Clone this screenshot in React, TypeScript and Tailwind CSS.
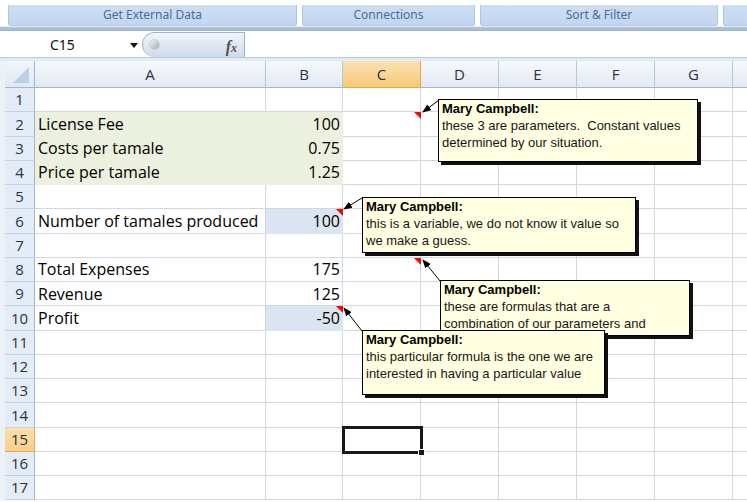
import React from "react";

const CELL_FONT = { fontFamily: '"Open Sans", "Liberation Sans", sans-serif' };
const UI_FONT = { fontFamily: '"Noto Sans", "Open Sans", sans-serif' };
const NOTE_FONT = { fontFamily: '"Liberation Sans", Arial, sans-serif' };

// H sits past the window edge, so only its left part (no caption) shows
const COLS = ["A", "B", "C", "D", "E", "F", "G", ""];

type Fill = "none" | "green" | "blue";

const rows: Record<number, { a?: string; b?: string; fillA?: Fill; fillB?: Fill }> = {
  2: { a: "License Fee", b: "100", fillA: "green", fillB: "green" },
  3: { a: "Costs per tamale", b: "0.75", fillA: "green", fillB: "green" },
  4: { a: "Price per tamale", b: "1.25", fillA: "green", fillB: "green" },
  6: { a: "Number of tamales produced", b: "100", fillB: "blue" },
  8: { a: "Total Expenses", b: "175" },
  9: { a: "Revenue", b: "125" },
  10: { a: "Profit", b: "-50", fillB: "blue" },
};

const fillClass: Record<Fill, string> = {
  none: "bg-white border-[#d0d7e5]",
  green: "bg-[#ebf1de] border-[#ebf1de]",
  blue: "bg-[#dbe5f1] border-[#dbe5f1]",
};

function RibbonGroup({ label, className }: { label: string; className: string }) {
  return (
    <div
      className={`h-[21px] flex items-center justify-center rounded-b-[3px] border border-t-0 border-[#aec6e6] bg-gradient-to-b from-[#cfdff3] to-[#c2d6ef] text-[12px] text-[#4a6c9e] ${className}`}
      style={UI_FONT}
    >
      {label}
    </div>
  );
}

function Note({ className, lines }: { className: string; lines: string[] }) {
  return (
    <div
      className={`absolute overflow-hidden bg-[#ffffe1] border border-black shadow-[3px_3px_0_#111] pl-[3px] text-[13px] leading-[17px] text-[#1c1416] ${className}`}
      style={NOTE_FONT}
    >
      <div className="font-bold text-black">Mary Campbell:</div>
      {lines.map((l) => (
        <div key={l} className="whitespace-pre">
          {l}
        </div>
      ))}
    </div>
  );
}

export default function App() {
  const rowNums = Array.from({ length: 17 }, (_, i) => i + 1);

  return (
    <div className="relative w-[747px] h-[502px] overflow-hidden bg-white">
      {/* ribbon group captions */}
      <div className="h-[26px] pt-[5px] flex gap-[5px] pl-[8px] bg-white">
        <RibbonGroup label="Get External Data" className="w-[289px]" />
        <RibbonGroup label="Connections" className="w-[173px]" />
        <RibbonGroup label="Sort & Filter" className="w-[238px]" />
        <RibbonGroup label="" className="flex-1 rounded-br-none border-r-0" />
      </div>
      <div className="h-[1px] bg-[#e3ecf7]" />
      <div className="h-[4px] bg-gradient-to-b from-[#b3c6de] to-[#9fb5d0]" />

      {/* formula bar */}
      <div className="h-[26px] flex items-center bg-white">
        <div className="w-[137px] h-full flex items-center pl-[45px] ml-[5px] relative" style={UI_FONT}>
          <span className="text-[14px] text-[#111] mt-[1px]">C15</span>
          <svg className="absolute left-[125px] top-[12px]" width="8" height="5" viewBox="0 0 8 5">
            <path d="M0 0 L8 0 L4 5 Z" fill="#111" />
          </svg>
        </div>
        <div className="w-[103px] h-[25px] self-end relative rounded-l-full border border-[#9fb2cc] border-b-0 bg-gradient-to-b from-[#f2f5fa] to-[#cfdbea]">
          <div className="absolute left-[6px] top-[6px] w-[11px] h-[11px] rounded-full bg-gradient-to-br from-[#f4f4f4] to-[#a9adb3] border border-[#c9ced6]" />
          <span
            className="absolute right-[7px] top-[2px] text-[16px] italic font-bold text-[#505050]"
            style={{ fontFamily: '"Liberation Serif", "DejaVu Serif", serif' }}
          >
            f<span className="text-[12px]">x</span>
          </span>
        </div>
        <div className="flex-1 h-full bg-white" />
      </div>
      <div className="h-[4px] border-t border-[#b9cbe2] bg-[#e2eaf5]" />

      {/* worksheet grid */}
      <div className="bg-[#edf2f9] pl-[5px] overflow-hidden">
        <div
          className="grid w-max grid-cols-[30px_231px_77px_78px_78px_78px_78px_78px_78px] grid-rows-[27px_repeat(17,24.25px)] text-[16px] text-black"
          style={CELL_FONT}
        >
          {/* corner */}
          <div className="relative border-r border-b border-[#9eb6ce] bg-gradient-to-b from-[#f3f6fb] to-[#e0e8f3]">
            <svg className="absolute left-[8px] top-[6px]" width="16" height="16" viewBox="0 0 16 16">
              <path d="M16 0 L16 16 L0 16 Z" fill="#bccfe6" />
            </svg>
          </div>
          {COLS.map((c, i) =>
            c === "C" ? (
              <div
                key={i}
                className="flex items-center justify-center border-r border-b border-[#f2a541] bg-gradient-to-b from-[#fbe2b3] to-[#f6c979] text-[15px] text-[#2a3340]"
              >
                {c}
              </div>
            ) : (
              <div
                key={i}
                className="flex items-center justify-center border-r border-b border-r-[#b7c8dd] border-b-[#9eb6ce] bg-gradient-to-b from-[#f7f9fc] to-[#e2e9f3] text-[15px] text-[#2a3340]"
              >
                {c}
              </div>
            )
          )}

          {rowNums.map((r) => {
            const d = rows[r] || {};
            const fa = d.fillA || "none";
            const fb = d.fillB || "none";
            return (
              <React.Fragment key={r}>
                {r === 15 ? (
                  <div className="flex items-center justify-center border-r border-b border-[#f2a541] bg-gradient-to-b from-[#fbe0ae] to-[#f7cf8a] text-[15px] text-[#2a3340]">
                    {r}
                  </div>
                ) : (
                  <div className="flex items-center justify-center border-r border-b border-r-[#9eb6ce] border-b-[#c5d3e4] bg-[#e4ecf7] text-[15px] text-[#2a3340]">
                    {r}
                  </div>
                )}
                <div className={`flex items-center pl-[3px] border-r border-b whitespace-nowrap ${fillClass[fa]}`}>
                  {d.a}
                </div>
                <div className={`flex items-center justify-end pr-[2px] border-r border-b ${fillClass[fb]}`}>
                  {d.b}
                </div>
                {COLS.slice(2).map((_, i) => (
                  <div key={i} className="border-r border-b border-[#d0d7e5] bg-white" />
                ))}
              </React.Fragment>
            );
          })}
        </div>
      </div>

      {/* active cell C15 */}
      <div className="absolute left-[342px] top-[426px] w-[81px] h-[28px] border-[3px] border-[#181818]" />
      <div className="absolute left-[418px] top-[449px] w-[7px] h-[7px] bg-[#181818] border border-white" />

      {/* comment indicators and arrows */}
      <svg className="absolute left-0 top-0 pointer-events-none" width="747" height="502" viewBox="0 0 747 502">
        <defs>
          <marker id="head" markerWidth="9" markerHeight="7" refX="8" refY="3.5" orient="auto" markerUnits="userSpaceOnUse">
            <path d="M0 0 L9 3.5 L0 7 Z" fill="#000" />
          </marker>
        </defs>
        <polygon points="414,112 421,112 421,119" fill="#ff0000" />
        <polygon points="336,209 343,209 343,216" fill="#ff0000" />
        <polygon points="414,258 421,258 421,265" fill="#ff0000" />
        <polygon points="336,306 343,306 343,313" fill="#ff0000" />
        <line x1="439" y1="100" x2="423" y2="112" stroke="#000" strokeWidth="1" markerEnd="url(#head)" />
        <line x1="362" y1="198" x2="344" y2="209" stroke="#000" strokeWidth="1" markerEnd="url(#head)" />
        <line x1="440" y1="281" x2="423" y2="260" stroke="#000" strokeWidth="1" markerEnd="url(#head)" />
        <line x1="362" y1="331" x2="344" y2="308" stroke="#000" strokeWidth="1" markerEnd="url(#head)" />
      </svg>

      <Note
        className="left-[438px] top-[99px] w-[260px] h-[63px]"
        lines={["these 3 are parameters.  Constant values", "determined by our situation."]}
      />
      <Note
        className="left-[362px] top-[197px] w-[274px] h-[56px]"
        lines={["this is a variable, we do not know it value so", "we make a guess."]}
      />
      <Note
        className="left-[440px] top-[280px] w-[250px] h-[56px]"
        lines={["these are formulas that are a", "combination of our parameters and"]}
      />
      <Note
        className="left-[362px] top-[330px] w-[243px] h-[65px]"
        lines={["this particular formula is the one we are", "interested in having a particular value"]}
      />
    </div>
  );
}
